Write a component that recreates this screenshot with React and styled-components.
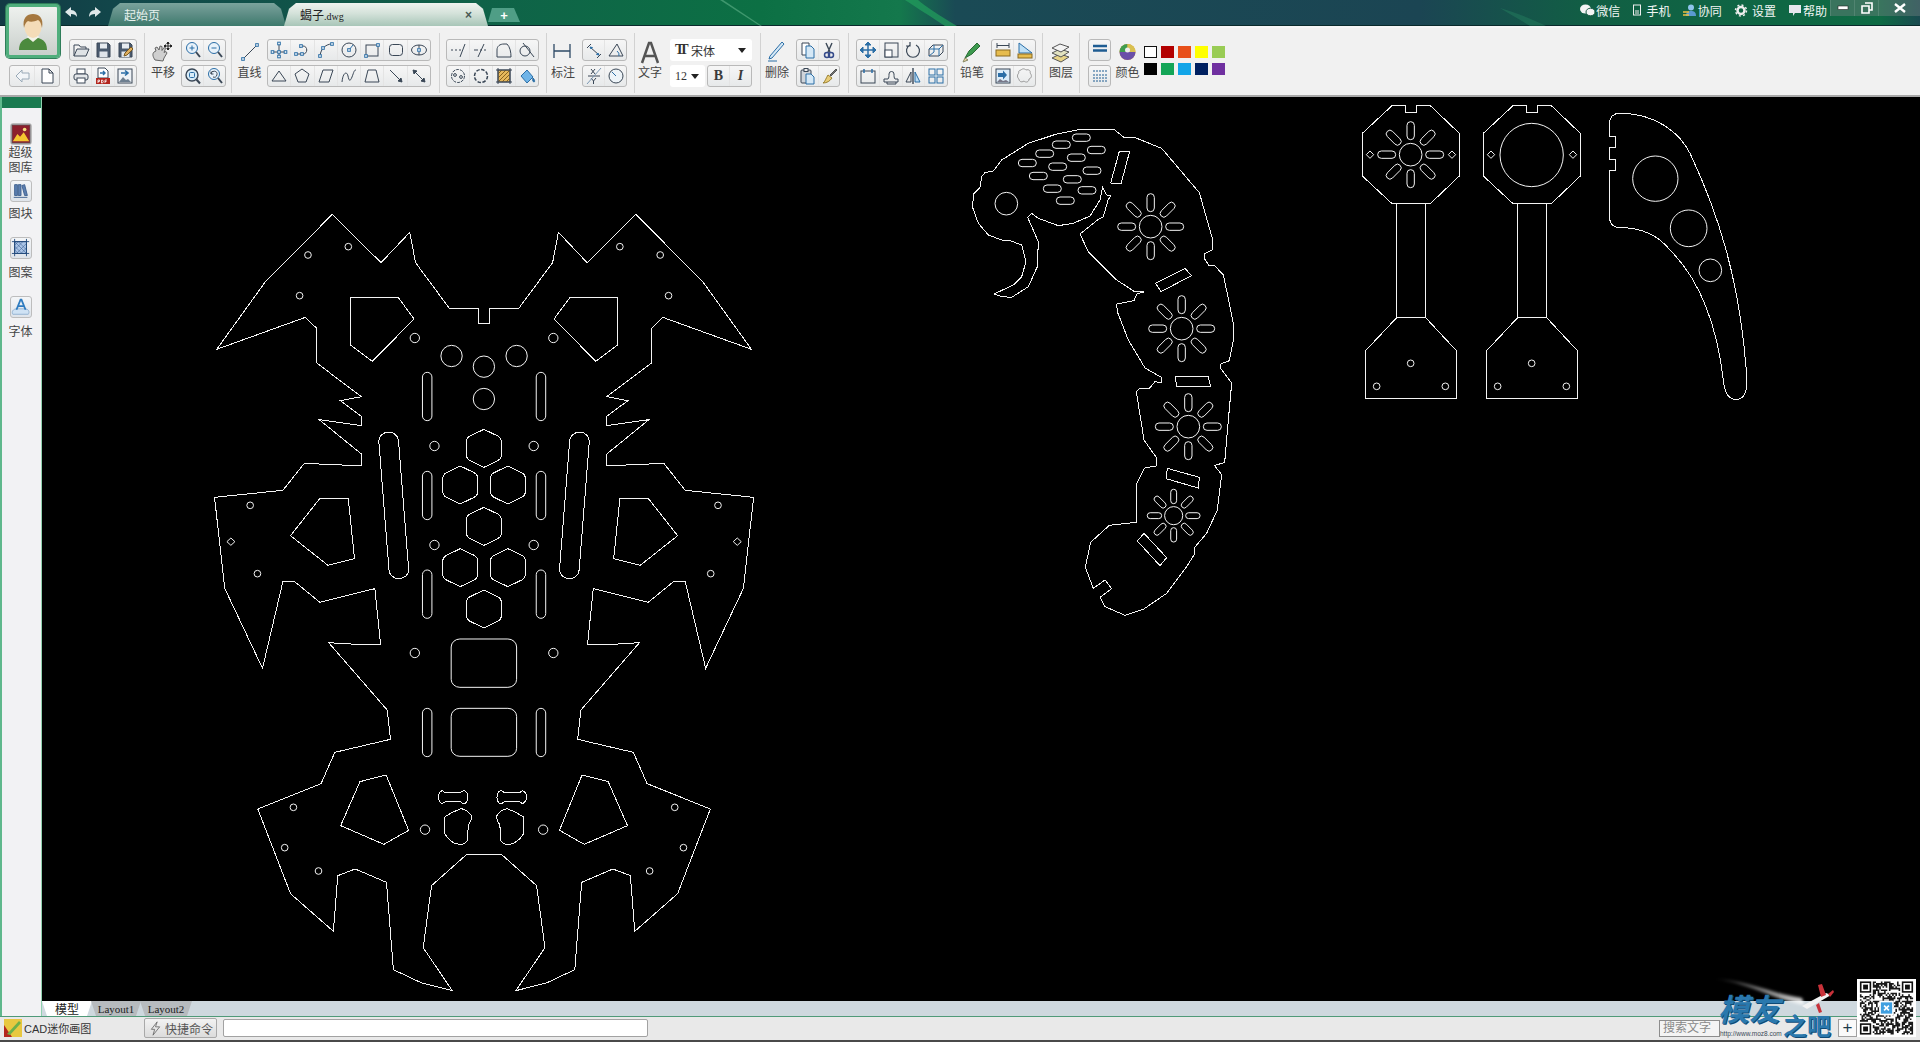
import React from "react";
import styled, { createGlobalStyle } from "styled-components";

const FONT = `"Liberation Sans", "Noto Sans CJK SC", sans-serif`;

const GlobalStyle = createGlobalStyle`
    html, body {
        margin: 0;
        padding: 0;
        overflow: hidden;
        background: #000;
    }
    * {
        box-sizing: border-box;
    }
`;

const Page = styled.div`
    position: relative;
    width: 1920px;
    height: 1042px;
    display: flex;
    flex-direction: column;
    font-family: ${FONT};
    font-size: 12px;
    color: #3a3a3a;
    overflow: hidden;
`;

/* ---------- title bar ---------- */

const TitleBar = styled.div`
    position: relative;
    height: 28px;
    flex: none;
    display: flex;
    padding-left: 61px;
    border-bottom: 2px solid #f6f6f6;
    box-shadow: inset 0 -1px 0 #0a2a2c;
    background: linear-gradient(
        90deg,
        #123a44 0,
        #12464a 110px,
        #0f6248 480px,
        #0c7044 760px,
        #14784c 900px,
        #1a4a55 955px,
        #1b4553 1420px,
        #115f44 1590px,
        #0e6b44 1880px,
        #1a4a50 1920px
    );
`;

const Swoosh = styled.svg`
    position: absolute;
    left: 0;
    top: 0;
    width: 1920px;
    height: 26px;
`;

const NavButton = styled.div`
    position: relative;
    width: 22px;
    display: flex;
    align-items: center;
    justify-content: center;
    height: 26px;
`;

const Tabs = styled.div`
    position: relative;
    display: flex;
    align-items: flex-end;
    height: 26px;
    margin-left: 3px;
`;

const Tab = styled.div`
    width: ${(p) => p.$w}px;
    height: 23px;
    margin-right: -2px;
    display: flex;
    align-items: center;
    justify-content: space-between;
    padding: 0 ${(p) => (p.$active ? 16 : 14)}px 0 ${(p) => (p.$active ? 16 : 16)}px;
    font-size: 12px;
    color: ${(p) => (p.$active ? "#222" : "#e8f2ee")};
    background: ${(p) =>
        p.$active
            ? "linear-gradient(180deg, #eef3ef 0%, #d4e2da 45%, #a8c6b8 100%)"
            : "linear-gradient(180deg, #7aa39c 0%, #5d8d85 50%, #3d7a6c 100%)"};
    clip-path: polygon(0 100%, 5px 25%, 12px 0, calc(100% - 12px) 0, calc(100% - 5px) 25%, 100% 100%);
`;

const TabExt = styled.span`
    font-family: "Liberation Serif", serif;
    font-size: 10px;
`;

const TabClose = styled.span`
    font-weight: 700;
    font-size: 12px;
    color: #4a5a55;
`;

const AddTab = styled.div`
    width: 32px;
    height: 14px;
    margin: 0 0 4px 2px;
    display: flex;
    align-items: center;
    justify-content: center;
    color: #fff;
    font-weight: 700;
    font-size: 13px;
    background: #4f9e86;
    clip-path: polygon(0 100%, 4px 0, calc(100% - 6px) 0, 100% 100%);
`;

const TopMenu = styled.div`
    position: relative;
    margin-left: auto;
    display: flex;
    gap: 12px;
    height: 20px;
    align-items: center;
`;

const MenuItem = styled.div`
    display: flex;
    align-items: center;
    gap: 1px;
    color: #f2f6f4;
    font-size: 12px;
`;

const WindowButtons = styled.div`
    position: relative;
    display: flex;
    margin-left: 3px;
    height: 16px;
    align-self: flex-start;
`;

const WindowButton = styled.div`
    width: ${(p) => p.$w}px;
    display: flex;
    align-items: center;
    justify-content: center;
    background: rgba(120, 130, 130, 0.42);
    border-left: 1px solid rgba(255, 255, 255, 0.12);
`;

const AvatarFrame = styled.div`
    position: absolute;
    left: 6px;
    top: 4px;
    width: 54px;
    height: 54px;
    z-index: 3;
    border: 3px solid #4fae7c;
    border-radius: 4px;
    background: linear-gradient(180deg, #eef1ee, #c9cfcb);
    box-shadow: 0 0 0 1px #2f7d59;
`;

/* ---------- toolbar ---------- */

const Toolbar = styled.div`
    height: 69px;
    flex: none;
    display: flex;
    align-items: flex-start;
    padding-top: 11px;
    background: #f1f1f1;
    border-bottom: 2px solid #a8a8a8;
`;

const Section = styled.div`
    width: ${(p) => p.$w}px;
    flex: none;
    display: flex;
    align-items: flex-start;
    gap: ${(p) => p.$gap || 0}px;
    padding-left: ${(p) => p.$pad || 0}px;
`;

const Separator = styled.div`
    width: 1px;
    height: 60px;
    flex: none;
    margin-top: -6px;
    background: #d2d2d2;
`;

const Stack = styled.div`
    display: flex;
    flex-direction: column;
    gap: 4px;
    margin-top: ${(p) => p.$top || 0}px;
`;

const Row = styled.div`
    display: flex;
    gap: 2px;
`;

const Group = styled.div`
    width: ${(p) => p.$w}px;
    height: 22px;
    display: flex;
    border: 1px solid #b9b9b9;
    border-radius: 3px;
    background: linear-gradient(180deg, #f6f6f6, #e7e9ea);
`;

const ToolButton = styled.div`
    flex: 1;
    display: flex;
    align-items: center;
    justify-content: center;
    border-left: 1px solid #e4e4e4;
    &:first-child {
        border-left: none;
    }
`;

const LabeledTool = styled.div`
    width: ${(p) => p.$w}px;
    flex: none;
    display: flex;
    flex-direction: column;
    align-items: center;
`;

const ToolIconSlot = styled.div`
    height: 26px;
    display: flex;
    align-items: center;
    justify-content: center;
`;

const ToolLabel = styled.div`
    line-height: 16px;
    font-size: 12px;
    color: #444;
`;

const FontSelect = styled.div`
    width: ${(p) => p.$w}px;
    height: 22px;
    display: flex;
    align-items: center;
    padding: 0 6px 0 5px;
    gap: 4px;
    background: #fff;
    border-radius: 3px;
    font-size: 12px;
    color: #333;
`;

const SerifLabel = styled.span`
    font-family: "Liberation Serif", serif;
    font-size: ${(p) => p.$size || 11}px;
    font-weight: ${(p) => (p.$bold ? 700 : 400)};
    font-style: ${(p) => (p.$italic ? "italic" : "normal")};
    letter-spacing: ${(p) => p.$track || 0}px;
`;

const Caret = styled.span`
    margin-left: auto;
    border-left: 4px solid transparent;
    border-right: 4px solid transparent;
    border-top: 5px solid #222;
`;

const SwatchGrid = styled.div`
    display: grid;
    grid-template-columns: repeat(5, 13px);
    grid-auto-rows: 12px;
    column-gap: 4px;
    row-gap: 5px;
    margin-top: 7px;
`;

const Swatch = styled.div`
    background: ${(p) => p.$color};
    border: ${(p) => (p.$outlined ? "1px solid #111" : "none")};
`;

/* ---------- body ---------- */

const Body = styled.div`
    flex: 1;
    min-height: 0;
    display: flex;
`;

const Sidebar = styled.div`
    width: 42px;
    flex: none;
    display: flex;
    flex-direction: column;
    align-items: center;
    padding: 26px 2px 0 0;
    background: linear-gradient(180deg, #1a7a50 0, #1a7a50 11px, #f2f2f4 11px);
    border-left: 2px solid #5fb88c;
    border-right: 1px solid #8fd0ae;
`;

const SideItem = styled.div`
    height: ${(p) => p.$h}px;
    display: flex;
    flex-direction: column;
    align-items: center;
`;

const SideButton = styled.div`
    width: 22px;
    height: 22px;
    flex: none;
    display: flex;
    align-items: center;
    justify-content: center;
    border: 1px solid #bdbdbd;
    border-radius: 3px;
    background: linear-gradient(180deg, #f4f6f8, #dfe4ea);
`;

const SideLabel = styled.div`
    margin-top: ${(p) => p.$gap}px;
    width: 26px;
    text-align: center;
    line-height: 15px;
    font-size: 12px;
    color: #444;
`;

const Main = styled.div`
    flex: 1;
    min-width: 0;
    display: flex;
    flex-direction: column;
`;

const Canvas = styled.div`
    flex: 1;
    min-height: 0;
    background: #000;
`;

const Drawing = styled.svg`
    display: block;
    width: 100%;
    height: 100%;
    & * {
        fill: none;
        stroke: #f4f4f4;
        stroke-width: 1;
        vector-effect: non-scaling-stroke;
    }
    & path {
        shape-rendering: crispEdges;
    }
`;

const SheetTabs = styled.div`
    height: 15px;
    flex: none;
    display: flex;
    background: #ced8de;
`;

const SheetTab = styled.div`
    width: ${(p) => p.$w}px;
    margin-right: -1px;
    display: flex;
    align-items: center;
    justify-content: center;
    font-family: ${(p) => (p.$active ? FONT : `"Liberation Serif", serif`)};
    font-size: ${(p) => (p.$active ? 12 : 11)}px;
    color: #222;
    background: ${(p) => (p.$active ? "#fff" : "#b7bbbe")};
    clip-path: polygon(0 0, 100% 0, calc(100% - 5px) 100%, 5px 100%);
`;

/* ---------- status bar ---------- */

const StatusBar = styled.div`
    height: 26px;
    flex: none;
    display: flex;
    align-items: center;
    padding: 0 63px 1px 4px;
    background: #e9e9e9;
    border-top: 1px solid #4f9a78;
    border-bottom: 2px solid #4a4a4a;
`;

const StatusLogo = styled.div`
    width: 18px;
    height: 18px;
    flex: none;
`;

const StatusText = styled.div`
    width: 122px;
    padding-left: 2px;
    font-size: 11px;
    color: #333;
`;

const CommandButton = styled.div`
    width: 73px;
    height: 20px;
    flex: none;
    display: flex;
    align-items: center;
    justify-content: center;
    gap: 2px;
    font-size: 12px;
    color: #555;
    border: 1px solid #a9a9a9;
    border-radius: 2px;
    background: linear-gradient(180deg, #f2f2f2, #dcdcdc);
`;

const CommandInput = styled.div`
    width: 425px;
    height: 18px;
    flex: none;
    margin-left: 6px;
    background: #fff;
    border: 1px solid #a2a2a2;
    border-radius: 2px;
`;

const SearchBox = styled.div`
    width: 61px;
    height: 17px;
    margin-left: auto;
    padding-left: 3px;
    line-height: 15px;
    font-size: 12px;
    color: #8a8a8a;
    background: #f4f4f4;
    border: 1px solid #8d8d8d;
`;

const PlusButton = styled.div`
    width: 19px;
    height: 18px;
    margin-left: 118px;
    flex: none;
    text-align: center;
    line-height: 16px;
    font-size: 17px;
    color: #1c3b4a;
    background: #fafafa;
    border: 1px solid #a0a0a0;
`;

/* ---------- watermark on top of the page ---------- */

const Watermark = styled.div`
    position: absolute;
    left: 1700px;
    top: 975px;
    width: 220px;
    height: 67px;
    z-index: 4;
`;

const MarkArt = styled.svg`
    position: absolute;
    left: 0;
    top: 0;
`;

const MarkBig = styled.div`
    position: absolute;
    left: 18px;
    top: 18px;
    font-size: 31px;
    line-height: 36px;
    font-weight: 700;
    font-style: italic;
    color: #2a78ad;
    text-shadow: 1px 1px 0 #0e4a76;
`;

const MarkSmall = styled.div`
    position: absolute;
    left: 83px;
    top: 39px;
    font-size: 24px;
    line-height: 26px;
    font-weight: 700;
    color: #2a78ad;
    text-shadow: 1px 1px 0 #0e4a76;
`;

const MarkUrl = styled.div`
    position: absolute;
    left: 20px;
    top: 54px;
    font-size: 6.5px;
    line-height: 9px;
    color: #3a4a58;
`;

const QrBox = styled.svg`
    position: absolute;
    left: 157px;
    top: 4px;
    width: 59px;
    height: 58px;
    background: #fff;
`;

/* ---------- icons ---------- */

const BLUE = "#2b6ea6";
const DARK = "#3a4756";

const Node = ({ x, y }) => <rect x={x - 1.3} y={y - 1.3} width="2.6" height="2.6" stroke={BLUE} fill="#fff" />;

const Floppy = () => (
    <>
        <path d="M3 2h11l2 2v12H3z" fill="#4a5a6e" stroke={DARK} />
        <rect x="6" y="2.5" width="7" height="5" fill="#e6ebf0" stroke="none" />
        <rect x="5.5" y="10.5" width="8" height="5.5" fill="#dfe4ea" stroke="none" />
    </>
);

const ICONS = {
    open: (
        <>
            <path d="M2 15V4h5l1.5 2H14v2" stroke={DARK} fill="#f4f4f4" />
            <path d="M2 15l3-7h12l-3 7z" stroke={DARK} fill="#dfe3e6" />
        </>
    ),
    save: <Floppy />,
    saveas: (
        <>
            <Floppy />
            <path d="M8 15l1-3 6-6 2 2-6 6z" fill="#e0b060" stroke="#7a5a20" />
        </>
    ),
    back: <path d="M9 3L3 9l6 6v-3h7V6H9z" stroke="#9aaab8" fill="#f2f5f8" />,
    page: <path d="M4 2h7l4 4v10H4zM11 2v4h4" stroke={DARK} fill="#fff" />,
    print: (
        <>
            <rect x="5" y="2" width="8" height="5" stroke={DARK} fill="#fff" />
            <rect x="2" y="7" width="14" height="6" rx="2" stroke={DARK} fill="#e4e7ea" />
            <rect x="5" y="11" width="8" height="5" stroke={DARK} fill="#fff" />
        </>
    ),
    pdf: (
        <>
            <path d="M4 1h7l3 3v7H4z" stroke={DARK} fill="#fff" />
            <path d="M6 6h5M9 4l2 2-2 2" stroke={BLUE} strokeWidth="1.4" />
            <rect x="2" y="11" width="14" height="6" fill="#b3261e" stroke="none" />
            <path d="M4 16v-3h1.500v1.500H4M7.500 13v3h1l.8-1.500-.8-1.500zM11 16v-3h2M11 14.500h1.500" stroke="#fff" strokeWidth=".8" />
        </>
    ),
    exportImage: (
        <>
            <rect x="2" y="2" width="14" height="14" stroke={DARK} fill="#eef2f6" />
            <path d="M3 15l4-5 3 3 2-1 3 3z" fill="#6e7f90" stroke="none" />
            <path d="M5 6h6M9 3.500L12 6 9 8.500" stroke={BLUE} strokeWidth="1.600" />
        </>
    ),
    zoomIn: (
        <>
            <circle cx="8" cy="7" r="5.500" stroke={BLUE} fill="#e8f2fa" />
            <path d="M5.500 7h5M8 4.500v5" stroke={BLUE} />
            <path d="M12 11l4 5" stroke={DARK} strokeWidth="2" />
        </>
    ),
    zoomOut: (
        <>
            <circle cx="8" cy="7" r="5.500" stroke={BLUE} fill="#e8f2fa" />
            <path d="M5.500 7h5" stroke={BLUE} />
            <path d="M12 11l4 5" stroke={DARK} strokeWidth="2" />
        </>
    ),
    zoomWindow: (
        <>
            <circle cx="8" cy="8" r="6" stroke={DARK} strokeWidth="1.400" fill="#d8ecf8" />
            <rect x="5.500" y="5.500" width="5" height="5" rx="1" stroke={BLUE} />
            <path d="M12.500 12.500l3.500 4" stroke={DARK} strokeWidth="2" />
        </>
    ),
    zoomPrev: (
        <>
            <circle cx="8" cy="7" r="5.500" stroke={BLUE} fill="#e8f2fa" />
            <path d="M5 7a3 3 0 1 1 2 3M5 4.500V7h2.500" stroke={DARK} />
            <path d="M12 11l4 5" stroke={DARK} strokeWidth="2" />
        </>
    ),
    hand: (
        <>
            <path d="M4 20c-2-3-3-6-1-8l2-1-1-3 2-1 2 3 1-4 2 .5v4l2-3 1.500 1-1.500 4 2-1 1 1.500-3 5-1 3z" fill="#cfcfcf" stroke="#666" />
            <path d="M17 2v8M13 6h8M17 2l-1.200 1.500h2.400zM17 10l-1.200-1.500h2.400zM13 6l1.500-1.200v2.400zM21 6l-1.500-1.200v2.400z" stroke="#222" fill="#222" />
        </>
    ),
    line: (
        <>
            <path d="M5 19L19 5" stroke={DARK} />
            <Node x={5} y={19} />
            <Node x={19} y={5} />
        </>
    ),
    cross: (
        <>
            <path d="M9 2v14M2 11h14" stroke={DARK} />
            <Node x={9} y={2.500} />
            <Node x={9} y={15.500} />
            <Node x={2.500} y={11} />
            <Node x={15.500} y={11} />
            <Node x={9} y={11} />
        </>
    ),
    polyline: (
        <>
            <path d="M2 13h8c5 0 5-8 0-8-2 0-3 1-3 2" stroke={DARK} />
            <Node x={3} y={13} />
            <Node x={9} y={13} />
            <Node x={8} y={5} />
        </>
    ),
    arc: (
        <>
            <path d="M3 16C3 9 8 3 15 3" stroke={DARK} />
            <Node x={3} y={15} />
            <Node x={6} y={7} />
            <Node x={15} y={3} />
        </>
    ),
    circle: (
        <>
            <circle cx="9" cy="9" r="7" stroke={DARK} />
            <path d="M9 9l4-5" stroke={BLUE} />
            <Node x={9} y={9} />
        </>
    ),
    rect: (
        <>
            <rect x="3" y="4" width="12" height="11" stroke={DARK} />
            <Node x={3} y={15} />
            <Node x={15} y={4} />
        </>
    ),
    roundRect: <rect x="2.500" y="3.500" width="13" height="11" rx="3" stroke={DARK} />,
    ellipse: (
        <>
            <ellipse cx="9" cy="9" rx="7.500" ry="5" stroke={DARK} />
            <path d="M9 4v3M9 11v3" stroke={DARK} />
            <Node x={9} y={9} />
        </>
    ),
    triangle: <path d="M9 4l7 10H2z" stroke={DARK} />,
    pentagon: <path d="M9 2l7 5-3 8H5L2 7z" stroke={DARK} />,
    parallelogram: <path d="M6 3h10l-4 12H2z" stroke={DARK} />,
    curve: <path d="M2 15C3 5 7 4 8 9s2 6 4 1 2-7 4-7" stroke={DARK} />,
    trapezoid: <path d="M5 3h8l3 12H2z" stroke={DARK} />,
    arrow: <path d="M3 3l12 12M15 15l-1-4-3 3z" stroke={DARK} fill={DARK} />,
    doubleArrow: <path d="M3 3l12 12M15 15l-1-4-3 3zM3 3l1 4 3-3z" stroke={DARK} fill={DARK} />,
    trim: <path d="M2 9h2M6 9h2M10 9h2M11 16l5-13" stroke={DARK} />,
    extend: <path d="M2 9h4M8 9h2M12 9h2M6 16L12 3" stroke={DARK} />,
    fillet: <path d="M2 16V9c0-4 3-6 7-6h3c3 3 4 8 4 13z" stroke={DARK} />,
    chamfer: (
        <>
            <path d="M5 2l11 14" stroke={DARK} />
            <circle cx="7" cy="10" r="5" stroke={DARK} />
        </>
    ),
    circleDots: (
        <>
            <circle cx="9" cy="9" r="6.500" stroke={DARK} strokeDasharray="3 1" />
            <circle cx="6" cy="8" r="1.400" stroke={DARK} />
            <circle cx="12" cy="10" r="1.400" stroke={DARK} />
        </>
    ),
    ringDots: <circle cx="9" cy="9" r="6.500" stroke={DARK} strokeWidth="1.500" strokeDasharray="3.500 1.500" />,
    hatch: (
        <>
            <rect x="3" y="3" width="12" height="12" fill="#e6b85c" stroke={DARK} />
            <path d="M3 7l4-4M3 11l8-8M3 15L15 3M7 15l8-8M11 15l4-4" stroke="#8a6420" />
            <path d="M1 3h16M1 15h16M3 1v16M15 1v16" stroke={DARK} />
        </>
    ),
    bucket: (
        <>
            <path d="M3 9l6-6 6 7-6 6z" fill="#6fb4e8" stroke={BLUE} />
            <path d="M15 11c2 2 2 4 1 4s-2-2-1-4z" fill={BLUE} stroke={BLUE} />
        </>
    ),
    dimH: <path d="M3 4v14M19 4v14M3 11h16" stroke="#2e4a66" strokeWidth="1.300" />,
    dimAligned: (
        <>
            <path d="M2 7l4-4M12 17l4-4M5 6l9 8" stroke={DARK} />
            <path d="M5 6l2.500 .6L6 8zM14 14l-2.500-.6L13 12z" stroke={BLUE} fill={BLUE} />
        </>
    ),
    dimAngle: (
        <>
            <path d="M2 15h14L10 3z" stroke={DARK} />
            <path d="M12 15a5 5 0 0 0-2-5" stroke={BLUE} />
        </>
    ),
    fraction: (
        <>
            <path d="M6 2l4 5M10 2L6 7M3 9h12M6 11l2.500 3v3M11 11l-2.500 3" stroke={DARK} />
            <path d="M2 17L16 1" stroke="#7c98b4" />
        </>
    ),
    radius: (
        <>
            <circle cx="9" cy="9" r="7" stroke={DARK} fill="#eef4f8" />
            <path d="M9 9L5 5" stroke={BLUE} />
        </>
    ),
    bigA: <path d="M4 23L11 3h2l7 20M7 16h10" stroke="#555" strokeWidth="2.500" />,
    eraser: (
        <>
            <path d="M5 16l-1 3 3-1 12-14-2-2z" fill="#d5e8f6" stroke={BLUE} />
            <path d="M3 21h9" stroke={BLUE} />
        </>
    ),
    copy: (
        <>
            <path d="M4 2h7v12H4z" stroke={DARK} fill="#fff" />
            <path d="M8 5h5l3 3v9H8z" stroke={BLUE} fill="#d5e8f6" />
        </>
    ),
    cut: (
        <>
            <path d="M6 2l4 9M12 2L8 11" stroke={DARK} strokeWidth="1.400" />
            <circle cx="7" cy="14" r="2.500" stroke="#344a8a" strokeWidth="1.500" />
            <circle cx="11" cy="14" r="2.500" stroke="#344a8a" strokeWidth="1.500" />
        </>
    ),
    paste: (
        <>
            <rect x="3" y="3" width="10" height="13" rx="1" stroke={DARK} fill="#cfd4da" />
            <rect x="6" y="1.500" width="4" height="3" stroke={DARK} fill="#eee" />
            <path d="M8 7h5l3 3v7H8z" stroke={BLUE} fill="#d5e8f6" />
        </>
    ),
    brush: (
        <>
            <path d="M10 8l6-6 1 1-6 6z" fill="#777" stroke="#555" />
            <path d="M3 16c2-1 3-5 5-8l4 3c-2 3-5 5-9 5z" fill="#e8cc78" stroke="#9a8030" />
        </>
    ),
    move: (
        <>
            <path d="M9 1v16M1 9h16" stroke={BLUE} strokeWidth="1.500" />
            <path d="M9 1l-3 3h6zM9 17l-3-3h6zM1 9l3-3v6zM17 9l-3-3v6z" fill={BLUE} stroke={BLUE} />
        </>
    ),
    scale: (
        <>
            <rect x="3" y="2" width="13" height="14" stroke={DARK} />
            <rect x="3" y="9" width="7" height="7" stroke={DARK} fill="#fff" />
        </>
    ),
    rotate: <path d="M6 4a6.500 6.500 0 1 0 6 0M6 1v4H2" stroke={DARK} strokeWidth="1.200" />,
    box3d: (
        <>
            <path d="M2 8l4-4h10v7l-4 4H2z" stroke={DARK} />
            <path d="M2 8h10v7M12 8l4-4M7 4v7l-5 4" stroke={BLUE} />
        </>
    ),
    tabbed: (
        <>
            <rect x="2" y="4" width="14" height="12" stroke={DARK} />
            <path d="M5 2v4M13 2v4" stroke={BLUE} strokeWidth="1.500" />
        </>
    ),
    stamp: <path d="M2 15v-3h4c1-1 1-3 1-5a2.500 2.500 0 0 1 5 0c0 2 0 4 1 5h3v3zM5 15v2h9v-2" stroke={DARK} />,
    mirror: (
        <>
            <path d="M9 1v16" stroke={DARK} strokeWidth="1.400" />
            <path d="M7 5L2 15h5z" stroke={DARK} />
            <path d="M11 5l5 10h-5z" stroke={BLUE} fill="#bcdcf4" />
        </>
    ),
    grid: (
        <>
            <rect x="2" y="2" width="6" height="6" stroke={BLUE} />
            <rect x="10" y="2" width="6" height="6" stroke={BLUE} />
            <rect x="2" y="10" width="6" height="6" stroke={BLUE} />
            <rect x="10" y="10" width="6" height="6" stroke={BLUE} />
        </>
    ),
    pencil: (
        <>
            <path d="M5 18l4-7 8-8 3 3-8 8z" fill="#3d9a4f" stroke="#2a6a35" />
            <path d="M5 18l-2 4 5-2z" fill="#f0d8a0" stroke="#886" />
        </>
    ),
    ruler: (
        <>
            <path d="M3 2v5M15 2v5M3 4.500h12" stroke={DARK} />
            <rect x="2" y="9" width="14" height="6" fill="#e6bc4e" stroke="#8a6a20" />
        </>
    ),
    setSquare: (
        <>
            <path d="M3 2l13 10H3z" fill="#bfe0f6" stroke={BLUE} />
            <rect x="2" y="13" width="14" height="4" fill="#e6bc4e" stroke="#8a6a20" />
        </>
    ),
    imageArrow: (
        <>
            <rect x="2" y="2" width="14" height="14" stroke={DARK} fill="#dcecf8" />
            <path d="M4 6h5V3.500L13 8l-4 4.500V10H4z" fill={BLUE} stroke="none" />
            <path d="M3 15l3-3 3 2 3-1 3 2z" fill="#778" stroke="none" />
        </>
    ),
    cloud: <path d="M5 3c2-2 4-1 5 0 3-1 5 1 4 3 2 2 2 5-1 6 0 3-3 4-5 2-3 2-5 0-5-2-2-1-2-5 0-6-1-1 0-3 2-3z" stroke="#9a9a9a" />,
    layers: (
        <>
            <path d="M3 18l8-4 9 3-8 5z" fill="#e8d488" stroke="#555" />
            <path d="M3 13l8-4 9 3-8 5z" fill="#e2e2c0" stroke="#555" />
            <path d="M3 8l8-4 9 3-8 5z" fill="#f4f4f4" stroke="#555" />
        </>
    ),
    thickLines: <path d="M2 5h14M2 9.500h14" stroke="#1e5c92" strokeWidth="2.500" />,
    dashLines: <path d="M2 4h14M2 8h14M2 11h14M2 14h14" stroke="#1e5c92" strokeDasharray="2 1" />,
    bolt: <path d="M11 1L4 10h4l-2 7 8-10H9z" stroke="#666" />,
    undo: <path d="M8 3L2 8l6 5v-3c3 0 5 1 6 3 0-4-2-7-6-7z" fill="#dfe8ea" stroke="none" />,
    redo: <path d="M10 3l6 5-6 5v-3c-3 0-5 1-6 3 0-4 2-7 6-7z" fill="#dfe8ea" stroke="none" />,
    gallery: (
        <>
            <rect x="1" y="1" width="20" height="20" fill="#8c1f2c" stroke="#5a5a5a" />
            <path d="M2 19l5-8 3 3 4-5 6 10z" fill="#f4c430" stroke="none" />
            <circle cx="15" cy="6" r="2" fill="#f4e080" stroke="none" />
        </>
    ),
    books: <path d="M4 4h3v12H4zM8 4h3v12H8zM12 5l3-1 3 12h-3zM3 18h15" stroke="#3d5f8e" fill="#5c7fb0" />,
    pattern: (
        <>
            <rect x="4" y="4" width="13" height="13" fill="#aac4e6" stroke="#234a7a" />
            <path d="M4 8l4-4M4 13l9-9M6 17L17 6M11 17l6-6M8 4l9 9M4 4l13 13M4 9l8 8M4 13l4 4" stroke="#3a5f92" strokeWidth=".6" />
            <path d="M1 4h19M1 17h19M4 1v19M17 1v19" stroke="#234a7a" />
        </>
    ),
    fontA: (
        <>
            <path d="M2 19c-2-3 1-6 4-6h9c4 0 6 3 4 6z" fill="#cfe2f4" stroke="#8fb0d0" />
            <path d="M6 14l4.500-11h1L16 14M8 10h6" stroke="#2f7cc0" strokeWidth="2" />
        </>
    )
};

const Glyph = ({ name, size = 18, box = 18 }) => (
    <svg width={size} height={size} viewBox={`0 0 ${box} ${box}`} fill="none">
        {ICONS[name]}
    </svg>
);

const Tools = ({ w, names }) => (
    <Group $w={w}>
        {names.map((n) => (
            <ToolButton key={n}>
                <Glyph name={n} />
            </ToolButton>
        ))}
    </Group>
);

const TallTool = ({ w, name, label }) => (
    <LabeledTool $w={w}>
        <ToolIconSlot>
            <Glyph name={name} size={24} box={24} />
        </ToolIconSlot>
        <ToolLabel>{label}</ToolLabel>
    </LabeledTool>
);

const Avatar = () => (
    <AvatarFrame>
        <svg width="48" height="48" viewBox="0 0 48 48" fill="none">
            <path d="M10 43c0-9 5-12 14-13 9 1 14 4 14 13z" fill="#4c8a3e" />
            <path d="M18 30l6 5 6-5-2-3h-8z" fill="#f2f2e8" />
            <ellipse cx="24" cy="20" rx="8.500" ry="11" fill="#f4dcb8" />
            <path d="M15 21c-2-10 3-14 9-14s11 4 9 14c-1-5-2-7-4-8-4 2-8 2-10 1-2 1-3 3-4 7z" fill="#a5783f" />
        </svg>
    </AvatarFrame>
);

/* ---------- CAD geometry, in the coordinates of the parts ---------- */

const Ell = ({ x, y, r }) => <ellipse cx={x} cy={y} rx={r * 0.917} ry={r} />;
const Dia = ({ x, y, r = 11 }) => <polygon points={`${x - r},${y} ${x},${y - r} ${x + r},${y} ${x},${y + r}`} />;

const hexPath = (x, y) =>
    `M${x},${y - 57}L${x + 38},${y - 37}Q${x + 48},${y - 31} ${x + 48},${y - 20}L${x + 48},${y + 20}Q${x + 48},${y + 31} ${x + 38},${y + 37}L${x},${y + 57}L${x - 38},${y + 37}Q${x - 48},${y + 31} ${x - 48},${y + 20}L${x - 48},${y - 20}Q${x - 48},${y - 31} ${x - 38},${y - 37}Z`;

const FRAME_OUTLINE =
    "M781,370L766,370L766,325L686,325L593,188L577,97L498,188L364,43L180,245L46,448L290,352L320,384L320,488L444,590L386,602L445,650L445,677L328,659L444,762L444,796L410,796L287,790L228,871L40,892L68,1165L172,1405L228,1145L258,1143L330,1207L481,1166L497,1335L413,1332L354,1328L515,1530L524,1618L371,1657L333,1751L159,1827L249,2081L367,2194L379,2027L427,2007L513,2047L532,2309L610,2349L694,2372L614,2243L637,2057L734,1963L781,1963";

const FrameHalf = () => (
    <>
        <path d={FRAME_OUTLINE} />
        <path d="M414,292L545,292L589,357L474,484L414,435Z" />
        <path d="M330,895L408,897L425,1076L352,1096L249,1007Z" />
        <path d="M440,1745L512,1725L574,1891L506,1933L387,1877Z" />
        <path d="M492,725A27,27 0 0 1 546,722L574,1108A27,27 0 0 1 520,1110Z" />
        {[517, 814, 1110, 1525].map((y) => (
            <rect key={y} x="612" y={y} width="26" height="145" rx="13" ry="14" />
        ))}
        <Ell x={297} y={165} r={10} />
        <Ell x={408} y={140} r={10} />
        <Ell x={274} y={287} r={10} />
        <Ell x={591} y={414} r={14} />
        <Ell x={692} y={468} r={32} />
        <Ell x={645} y={738} r={14} />
        <Ell x={645} y={1035} r={14} />
        <Ell x={591} y={1359} r={14} />
        <Ell x={138} y={916} r={10} />
        <Dia x={85} y={1025} />
        <Ell x={158} y={1121} r={10} />
        <Ell x={257} y={1822} r={10} />
        <Ell x={233} y={1943} r={10} />
        <Ell x={326} y={2013} r={10} />
        <Ell x={619} y={1889} r={14} />
        <path d={hexPath(716, 855)} />
        <path d={hexPath(716, 1103)} />
        <path d="M718,1826Q735,1828 747,1848Q748,1860 738,1875L736,1920Q730,1935 712,1933Q690,1930 674,1903Q670,1880 674,1850Q695,1835 718,1826Z" />
    </>
);

const Bone = () => (
    <path d="M666,1772Q655,1778 656,1792Q656,1804 666,1811Q672,1808 676,1804L715,1804Q722,1811 728,1811Q737,1806 737,1792Q737,1778 728,1772Q722,1772 715,1779L676,1779Q672,1776 666,1772Z" />
);

const Frame = () => (
    <g transform="translate(200 200) scale(0.3635 0.33333)">
        <FrameHalf />
        <g transform="translate(1563 0) scale(-1 1)">
            <FrameHalf />
        </g>
        <Bone />
        <g transform="translate(1554 0) scale(-1 1)">
            <Bone />
        </g>
        <Ell x={781} y={500} r={32} />
        <Ell x={781} y={597} r={32} />
        <path d={hexPath(781, 745)} />
        <path d={hexPath(781, 979)} />
        <path d={hexPath(781, 1227)} />
        <rect x="691" y="1317" width="180" height="145" rx="24" />
        <rect x="691" y="1525" width="180" height="144" rx="24" />
    </g>
);

const Flower = ({ x, y, k = 1 }) => (
    <>
        <circle cx={x} cy={y} r={34 * k} />
        {[0, 45, 90, 135, 180, 225, 270, 315].map((a) => (
            <rect
                key={a}
                x={x + (72 - 27) * k}
                y={y - 11 * k}
                width={54 * k}
                height={22 * k}
                rx={11 * k}
                transform={`rotate(${a} ${x} ${y})`}
            />
        ))}
    </>
);

const TAIL_OUTLINE =
    "M360,58L462,58L492,82L528,84L605,115L718,248L757,385L757,420L733,432L733,445L748,468L765,468L790,495L808,580L822,650L820,690L808,752L782,762L782,775L812,815L815,820L805,930L794,1058L763,1066L785,1094L772,1200L740,1270L704,1312L705,1330L680,1370L620,1450L550,1498L495,1516L435,1490L420,1462L455,1436L435,1410L400,1435L376,1372L392,1297L448,1246L530,1237L530,1122L554,1074L588,1068L590,1044L552,990L529,845L538,836L568,835L585,815L605,818L604,802L555,774L505,690L472,605L470,582L522,572L530,552L551,546L524,545L470,510L420,460L385,425L360,372L415,328L430,320L445,268L452,258L440,255L428,232L420,270L390,318L340,340L295,347L235,325L215,310L203,322L235,395L232,470L205,530L155,562L125,560L102,552L160,525L185,500L198,455L185,405L150,392L125,390L85,375L55,340L37,290L42,250L60,232L65,200L75,188L100,183L125,150L205,100L290,72Z";

const TAIL_SLOTS = [
    [364, 83], [409, 120], [304, 104], [349, 143], [254, 131], [396, 182], [293, 170],
    [202, 159], [235, 198], [337, 208], [277, 236], [381, 241], [316, 272]
];

const Tail = () => (
    <g transform="translate(960 110) scale(0.33333)">
        <path d={TAIL_OUTLINE} />
        {TAIL_SLOTS.map(([x, y]) => (
            <rect key={x} x={x - 27} y={y - 11} width="54" height="22" rx="11" />
        ))}
        <circle cx="139" cy="281" r="34" />
        <path d="M478,124L509,124L483,222L452,219Z" />
        <path d="M675,475L694,497L603,545L587,520Z" />
        <path d="M646,800L745,800L752,830L650,830Z" />
        <path d="M622,1075L718,1102L715,1134L618,1106Z" />
        <path d="M532,1293L552,1270L620,1343L600,1367Z" />
        <Flower x={572} y={350} />
        <Flower x={665} y={656} />
        <Flower x={685} y={950} />
        <Flower x={641} y={1217} k={0.8} />
    </g>
);

const Octagon = () => (
    <path d="M155,48L196,48L196,68L230,68L230,48L272,48L358,130L358,258L272,340L155,340L67,258L67,130Z" />
);

const Arm = () => (
    <>
        <Octagon />
        <path d="M170,340L170,683L76,783L76,925L350,925L350,783L257,683L257,340M170,683L257,683" />
        <circle cx="212" cy="820" r="10" />
        <circle cx="110" cy="889" r="10" />
        <circle cx="316" cy="889" r="10" />
        <Dia x={90} y={194} />
        <Dia x={336} y={194} />
    </>
);

const Mounts = () => (
    <g transform="translate(1340 90) scale(0.33333)">
        <Arm />
        <Flower x={212} y={194} />
        <g transform="translate(363 0)">
            <Arm />
            <circle cx="212" cy="195" r="95" />
        </g>
        <path d="M808,100Q810,70 840,70C950,70 1020,130 1050,190C1130,360 1200,560 1221,870Q1222,928 1188,928Q1155,928 1150,870C1130,700 1080,570 990,480C950,430 900,413 840,413Q808,413 808,375L808,242L827,240L827,208L808,208L808,172L827,172L827,140L808,138Z" />
        <circle cx="946" cy="266" r="68" />
        <circle cx="1046" cy="415" r="55" />
        <circle cx="1111" cy="541" r="34" />
    </g>
);

/* fake QR modules, stable from one load to the next */
const qrPath = () => {
    let seed = 73;
    let d = "";
    const finder = (x, y) => x >= 0 && y >= 0 && x < 8 && y < 8;
    for (let y = 0; y < 33; y++) {
        for (let x = 0; x < 33; x++) {
            seed = (seed * 1103515245 + 12345) & 0x7fffffff;
            const corner = finder(x, y) || finder(32 - x, y) || finder(x, 32 - y);
            if (!corner && (seed >> 16) % 100 < 52) d += `M${x} ${y}h1v1h-1z`;
        }
    }
    return d;
};

const QR_MODULES = qrPath();

const QrFinder = ({ x, y }) => (
    <>
        <rect x={x + 0.5} y={y + 0.5} width="6" height="6" fill="none" stroke="#111" />
        <rect x={x + 2} y={y + 2} width="3" height="3" fill="#111" />
    </>
);

const QrCode = () => (
    <QrBox viewBox="-1.5 -1.500 36 36">
        <path d={QR_MODULES} fill="#1a1a1a" />
        <QrFinder x={0} y={0} />
        <QrFinder x={26} y={0} />
        <QrFinder x={0} y={26} />
        <rect x="12.500" y="12.500" width="8" height="8" fill="#3f9fe0" stroke="#fff" />
        <path d="M15 15l3 3M18 15l-3 3" stroke="#fff" />
    </QrBox>
);

const COLORS = [
    "#ffffff", "#b30000", "#e8501a", "#ffff00", "#99cc55",
    "#000000", "#14a557", "#12a5e8", "#002060", "#7030a0"
];

const App = () => (
    <>
        <GlobalStyle />
        <Page>
            <TitleBar>
                <Swoosh viewBox="0 0 1920 26">
                    <path d="M720 0l40 26h2L723 0z" fill="#7cc8a0" opacity=".45" />
                    <path d="M905 0c12 8 28 18 40 26h12C940 16 925 6 918 0z" fill="#22a05c" opacity=".7" />
                    <path d="M1500 8c20 6 34 12 46 18h-16c-8-5-20-12-30-18z" fill="#2a9066" opacity=".35" />
                </Swoosh>
                <NavButton>
                    <Glyph name="undo" />
                </NavButton>
                <NavButton>
                    <Glyph name="redo" />
                </NavButton>
                <Tabs>
                    <Tab $w={178}>
                        <span>起始页</span>
                    </Tab>
                    <Tab $w={204} $active>
                        <span>
                            蝎子<TabExt>.dwg</TabExt>
                        </span>
                        <TabClose>×</TabClose>
                    </Tab>
                    <AddTab>+</AddTab>
                </Tabs>
                <TopMenu>
                    <MenuItem>
                        <svg width="15" height="13" viewBox="0 0 15 13">
                            <ellipse cx="5.500" cy="5" rx="5.500" ry="4.500" fill="#f4f4f4" />
                            <ellipse cx="10.500" cy="8" rx="4.500" ry="3.800" fill="#f4f4f4" stroke="#1a5a44" />
                        </svg>
                        微信
                    </MenuItem>
                    <MenuItem>
                        <svg width="10" height="13" viewBox="0 0 10 13">
                            <rect x="1.500" y="1" width="7" height="10" fill="none" stroke="#eee" />
                            <path d="M3 7h4M3 9h4" stroke="#eee" />
                        </svg>
                        &nbsp;手机
                    </MenuItem>
                    <MenuItem>
                        <svg width="14" height="13" viewBox="0 0 14 13">
                            <circle cx="8" cy="3.500" r="3" fill="#8fc4ec" />
                            <path d="M3 12c0-4 2-5 5-5s5 1 5 5z" fill="#5a9ad0" />
                            <path d="M0 8h6M0 11h6" stroke="#f0c040" strokeWidth="1.500" />
                        </svg>
                        协同
                    </MenuItem>
                    <MenuItem>
                        <svg width="14" height="13" viewBox="0 0 14 13">
                            <circle cx="7" cy="6.500" r="3.500" fill="none" stroke="#eee" strokeWidth="2.500" />
                            <circle cx="7" cy="6.500" r="5.500" fill="none" stroke="#eee" strokeWidth="1.500" strokeDasharray="2 2.300" />
                        </svg>
                        &nbsp;设置
                    </MenuItem>
                    <MenuItem>
                        <svg width="14" height="13" viewBox="0 0 14 13">
                            <path d="M1 1h12v8H7l-2 3V9H1z" fill="#e6e6ee" />
                        </svg>
                        帮助
                    </MenuItem>
                </TopMenu>
                <WindowButtons>
                    <WindowButton $w={24}>
                        <svg width="12" height="8" viewBox="0 0 12 8">
                            <rect x="1" y="2" width="10" height="3.500" fill="#fff" stroke="#222" strokeWidth=".6" />
                        </svg>
                    </WindowButton>
                    <WindowButton $w={24}>
                        <svg width="12" height="12" viewBox="0 0 12 12">
                            <path d="M4 1h7v7H8.500M1 4h7v7H1z" fill="none" stroke="#fff" strokeWidth="1.600" />
                        </svg>
                    </WindowButton>
                    <WindowButton $w={42}>
                        <svg width="12" height="10" viewBox="0 0 12 10">
                            <path d="M1 1l10 8M11 1L1 9" stroke="#fff" strokeWidth="2.400" />
                        </svg>
                    </WindowButton>
                </WindowButtons>
            </TitleBar>

            <Avatar />

            <Toolbar>
                <Section $w={144} $pad={9} $gap={9}>
                    <Stack $top={26}>
                        <Tools w={51} names={["back", "page"]} />
                    </Stack>
                    <Stack>
                        <Tools w={68} names={["open", "save", "saveas"]} />
                        <Tools w={68} names={["print", "pdf", "exportImage"]} />
                    </Stack>
                </Section>
                <Separator />
                <Section $w={86}>
                    <TallTool w={36} name="hand" label="平移" />
                    <Stack>
                        <Tools w={45} names={["zoomIn", "zoomOut"]} />
                        <Tools w={45} names={["zoomWindow", "zoomPrev"]} />
                    </Stack>
                </Section>
                <Separator />
                <Section $w={207}>
                    <TallTool w={35} name="line" label="直线" />
                    <Stack>
                        <Tools w={164} names={["cross", "polyline", "arc", "circle", "rect", "roundRect", "ellipse"]} />
                        <Tools w={164} names={["triangle", "pentagon", "parallelogram", "curve", "trapezoid", "arrow", "doubleArrow"]} />
                    </Stack>
                </Section>
                <Separator />
                <Section $w={106} $pad={6}>
                    <Stack>
                        <Tools w={93} names={["trim", "extend", "fillet", "chamfer"]} />
                        <Tools w={93} names={["circleDots", "ringDots", "hatch", "bucket"]} />
                    </Stack>
                </Section>
                <Separator />
                <Section $w={87} $gap={3}>
                    <TallTool w={32} name="dimH" label="标注" />
                    <Stack>
                        <Tools w={45} names={["dimAligned", "dimAngle"]} />
                        <Tools w={45} names={["fraction", "radius"]} />
                    </Stack>
                </Section>
                <Separator />
                <Section $w={125} $gap={5}>
                    <TallTool w={30} name="bigA" label="文字" />
                    <Stack>
                        <FontSelect $w={82}>
                            <SerifLabel $size={14} $bold $track={-5}>
                                TT
                            </SerifLabel>
                            &nbsp;宋体
                            <Caret />
                        </FontSelect>
                        <Row>
                            <FontSelect $w={35}>
                                <SerifLabel $size={12}>12</SerifLabel>
                                <Caret />
                            </FontSelect>
                            <Group $w={45}>
                                <ToolButton>
                                    <SerifLabel $size={14} $bold>
                                        B
                                    </SerifLabel>
                                </ToolButton>
                                <ToolButton>
                                    <SerifLabel $size={14} $bold $italic>
                                        I
                                    </SerifLabel>
                                </ToolButton>
                            </Group>
                        </Row>
                    </Stack>
                </Section>
                <Separator />
                <Section $w={87} $gap={3}>
                    <TallTool w={32} name="eraser" label="删除" />
                    <Stack>
                        <Tools w={44} names={["copy", "cut"]} />
                        <Tools w={44} names={["paste", "brush"]} />
                    </Stack>
                </Section>
                <Separator />
                <Section $w={105} $pad={7}>
                    <Stack>
                        <Tools w={92} names={["move", "scale", "rotate", "box3d"]} />
                        <Tools w={92} names={["tabbed", "stamp", "mirror", "grid"]} />
                    </Stack>
                </Section>
                <Separator />
                <Section $w={87} $gap={2}>
                    <TallTool w={34} name="pencil" label="铅笔" />
                    <Stack>
                        <Tools w={45} names={["ruler", "setSquare"]} />
                        <Tools w={45} names={["imageArrow", "cloud"]} />
                    </Stack>
                </Section>
                <Separator />
                <Section $w={36}>
                    <TallTool w={36} name="layers" label="图层" />
                </Section>
                <Separator />
                <Section $w={200} $pad={8} $gap={2}>
                    <Stack>
                        <Tools w={23} names={["thickLines"]} />
                        <Tools w={23} names={["dashLines"]} />
                    </Stack>
                    <LabeledTool $w={29}>
                        <ToolIconSlot>
                            <svg width="17" height="20" viewBox="0 0 17 20">
                                <circle cx="8.500" cy="10" r="8" fill="#e8a33c" />
                                <path d="M.5 10a8 8 0 0 1 8-8v8z" fill="#3f9d4f" />
                                <path d="M.5 10a8 8 0 0 0 16 0z" fill="#6a4fa8" />
                                <path d="M8.500 2a8 8 0 0 1 8 8h-8z" fill="#d8c050" />
                                <circle cx="8.500" cy="8" r="2.500" fill="#eee" />
                            </svg>
                        </ToolIconSlot>
                        <ToolLabel>颜色</ToolLabel>
                    </LabeledTool>
                    <SwatchGrid>
                        {COLORS.map((c, i) => (
                            <Swatch key={c} $color={c} $outlined={i === 0} />
                        ))}
                    </SwatchGrid>
                </Section>
            </Toolbar>

            <Body>
                <Sidebar>
                    <SideItem $h={57}>
                        <SideButton>
                            <Glyph name="gallery" size={20} box={22} />
                        </SideButton>
                        <SideLabel $gap={1}>超级图库</SideLabel>
                    </SideItem>
                    <SideItem $h={57}>
                        <SideButton>
                            <Glyph name="books" size={20} box={22} />
                        </SideButton>
                        <SideLabel $gap={5}>图块</SideLabel>
                    </SideItem>
                    <SideItem $h={59}>
                        <SideButton>
                            <Glyph name="pattern" size={20} box={22} />
                        </SideButton>
                        <SideLabel $gap={7}>图案</SideLabel>
                    </SideItem>
                    <SideItem $h={57}>
                        <SideButton>
                            <Glyph name="fontA" size={20} box={22} />
                        </SideButton>
                        <SideLabel $gap={7}>字体</SideLabel>
                    </SideItem>
                </Sidebar>
                <Main>
                    <Canvas>
                        <Drawing viewBox="42 97 1878 904">
                            <Frame />
                            <Tail />
                            <Mounts />
                        </Drawing>
                    </Canvas>
                    <SheetTabs>
                        <SheetTab $w={50} $active>
                            模型
                        </SheetTab>
                        <SheetTab $w={50}>Layout1</SheetTab>
                        <SheetTab $w={52}>Layout2</SheetTab>
                    </SheetTabs>
                </Main>
            </Body>

            <StatusBar>
                <StatusLogo>
                    <svg width="18" height="18" viewBox="0 0 18 18">
                        <rect width="18" height="18" fill="#e8c840" />
                        <path d="M0 18V6l8 12z" fill="#b3261e" />
                        <path d="M3 15L15 2l2 2L6 16z" fill="#6cb04a" />
                    </svg>
                </StatusLogo>
                <StatusText>CAD迷你画图</StatusText>
                <CommandButton>
                    <Glyph name="bolt" size={15} />
                    快捷命令
                </CommandButton>
                <CommandInput />
                <SearchBox>搜索文字</SearchBox>
                <PlusButton>+</PlusButton>
            </StatusBar>

            <Watermark>
                <MarkArt width="157" height="67" viewBox="0 0 157 67">
                    <defs>
                        <linearGradient id="trail" x1="0" x2="1" y1="0" y2="0">
                            <stop offset="0" stopColor="#fff" stopOpacity="0" />
                            <stop offset="0.5" stopColor="#cfcfcf" stopOpacity=".6" />
                            <stop offset="1" stopColor="#fff" stopOpacity=".85" />
                        </linearGradient>
                        <filter id="soft">
                            <feGaussianBlur stdDeviation="1.600" />
                        </filter>
                    </defs>
                    <path d="M14 4C50 8 72 24 104 30L102 23C76 20 44 4 14 4z" fill="url(#trail)" filter="url(#soft)" />
                    <path d="M102 31l24-13 5 2-24 14z" fill="#f2f2f2" />
                    <path d="M118 10l4-1 4 11-5 2zM116 30l3-2 3 9-3 1z" fill="#c8323a" />
                    <path d="M128 19l5-4 1 2-4 5z" fill="#c8323a" />
                </MarkArt>
                <MarkBig>模友</MarkBig>
                <MarkSmall>之吧</MarkSmall>
                <MarkUrl>http://www.moz8.com</MarkUrl>
                <QrCode />
            </Watermark>
        </Page>
    </>
);

export default App;
